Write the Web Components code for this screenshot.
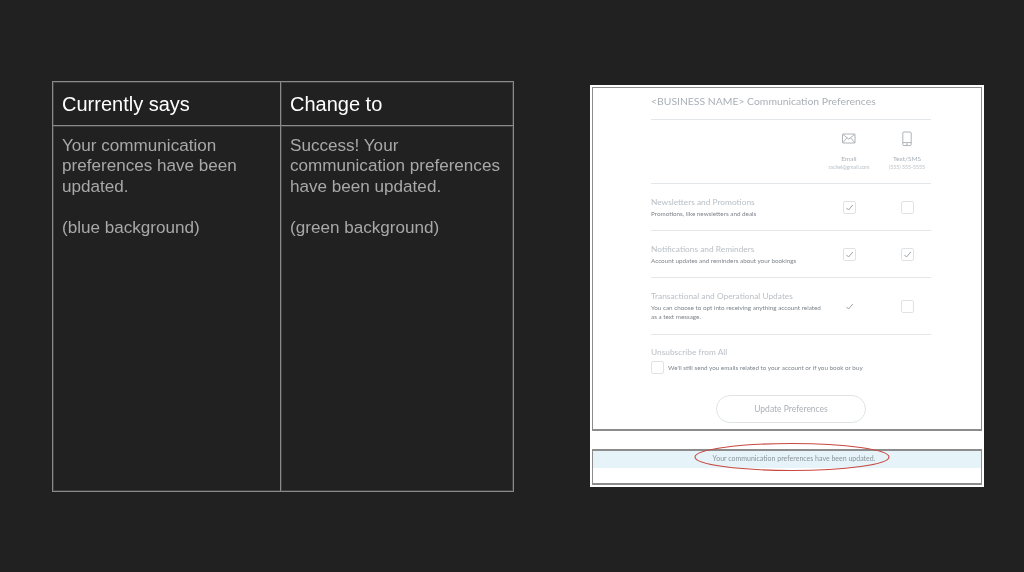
<!DOCTYPE html>
<html lang="en">
<head>
<meta charset="utf-8">
<title>Copy change</title>
<style>
  html, body { margin: 0; height: 100%; background: #212121; }
  body { overflow: hidden; font-family: "Liberation Sans", Arial, sans-serif; }
</style>
</head>
<body>
<copy-slide>
  <copy-table slot="table">
    <copy-column>
      <span slot="head">Currently says</span>
      Your communication preferences have been updated.<br><br>(blue background)
    </copy-column>
    <copy-column>
      <span slot="head">Change to</span>
      Success! Your communication preferences have been updated.<br><br>(green background)
    </copy-column>
  </copy-table>
  <prefs-shot slot="shot">
    <pref-row title="Newsletters and Promotions" email="on" sms="off">Promotions, like newsletters and deals</pref-row>
    <pref-row title="Notifications and Reminders" email="on" sms="on">Account updates and reminders about your bookings</pref-row>
    <pref-row title="Transactional and Operational Updates" email="bare" sms="off" tall>You can choose to opt into receiving anything account related<br>as a text message.</pref-row>
  </prefs-shot>
</copy-slide>

<script>
(function () {
  const CHECK = '<svg viewBox="0 0 13 13" width="13" height="13"><path d="M3.4 6.9 5.5 9 9.8 4" fill="none" stroke="#8f979d" stroke-width="0.9"/></svg>';

  class CopySlide extends HTMLElement {
    constructor() {
      super();
      this.attachShadow({ mode: 'open' });
      this.shadowRoot.innerHTML = `
        <style>
          :host { display: flex; align-items: flex-start; padding: 81px 0 0 52px; gap: 76px; }
          .shot { display: block; margin-top: 4px; }
        </style>
        <slot name="table"></slot>
        <div class="shot"><slot name="shot"></slot></div>
      `;
    }
  }

  class CopyTable extends HTMLElement {
    constructor() {
      super();
      this.attachShadow({ mode: 'open' });
      this.shadowRoot.innerHTML = `
        <style>
          :host {
            display: grid;
            grid-template-columns: 228px 1fr;
            box-sizing: border-box;
            width: 462px;
            height: 411px;
            border: 1px solid #8a8a8a;
            box-shadow: inset 0 0 0 1px #3e3e3e;
          }
        </style>
        <slot></slot>
      `;
    }
  }

  class CopyColumn extends HTMLElement {
    constructor() {
      super();
      this.attachShadow({ mode: 'open' });
      this.shadowRoot.innerHTML = `
        <style>
          :host { display: flex; flex-direction: column; min-width: 0; }
          :host(:first-child) { border-right: 1px solid #8a8a8a; box-shadow: 1px 0 0 #3e3e3e; }
          .head {
            box-sizing: border-box;
            height: 44px;
            padding: 11px 9px 0;
            border-bottom: 1px solid #8a8a8a;
            box-shadow: 0 1px 0 #3e3e3e;
            color: #fff;
            font-size: 20px;
            line-height: 23px;
          }
          .body {
            padding: 10px 9px 0;
            color: #a8a8a8;
            font-size: 17.1px;
            line-height: 20.4px;
          }
          .head span, .body span { display: block; filter: blur(0.3px); }
        </style>
        <div class="head"><span><slot name="head"></slot></span></div>
        <div class="body"><span><slot></slot></span></div>
      `;
    }
  }

  class PrefBox extends HTMLElement {
    static get observedAttributes() {
      return ['state'];
    }

    constructor() {
      super();
      this.attachShadow({ mode: 'open' });
    }

    connectedCallback() {
      this.render();
    }

    attributeChangedCallback() {
      if (this.isConnected) {
        this.render();
      }
    }

    render() {
      const state = this.getAttribute('state') || 'off';
      this.shadowRoot.innerHTML = `
        <style>
          :host { display: block; width: 13px; height: 13px; }
          .box {
            box-sizing: border-box;
            width: 13px;
            height: 13px;
            border: 1px solid ${state === 'bare' ? 'transparent' : '#dfe3e6'};
            border-radius: 2px;
            position: relative;
          }
          svg { position: absolute; left: -1px; top: -1px; display: block; }
        </style>
        <div class="box">${state === 'off' ? '' : CHECK}</div>
      `;
    }
  }

  class PrefRow extends HTMLElement {
    constructor() {
      super();
      this.attachShadow({ mode: 'open' });
    }

    connectedCallback() {
      const tall = this.hasAttribute('tall');
      this.shadowRoot.innerHTML = `
        <style>
          :host {
            display: grid;
            grid-template-columns: 164px 68px 48px;
            align-items: center;
            justify-items: center;
            height: ${tall ? 56 : 46}px;
            border-bottom: 1px solid #e4e7e9;
          }
          .text { justify-self: start; white-space: nowrap; }
          .title { color: #b9c0c6; font-size: 8.35px; line-height: 11px; }
          .desc { margin-top: 1px; color: #7d858c; font-size: 6.3px; line-height: ${tall ? 9.5 : 9}px; }
        </style>
        <div class="text">
          <div class="title">${this.getAttribute('title')}</div>
          <div class="desc"><slot></slot></div>
        </div>
        <pref-box state="${this.getAttribute('email')}"></pref-box>
        <pref-box state="${this.getAttribute('sms')}"></pref-box>
      `;
    }
  }

  class PrefsShot extends HTMLElement {
    constructor() {
      super();
      this.attachShadow({ mode: 'open' });
      this.shadowRoot.innerHTML = `
        <style>
          :host {
            display: block;
            box-sizing: border-box;
            width: 394px;
            height: 402px;
            padding: 2px;
            position: relative;
            background: #fff;
            font-family: Lato, "Open Sans", sans-serif;
          }
          .frame { box-sizing: border-box; border: 1px solid #8c8c8c; width: 390px; }
          .top { height: 344px; padding: 0 50px 0 58px; border-bottom-width: 2px; }
          .inner { filter: blur(0.5px); }
          .heading { height: 31px; border-bottom: 1px solid #e4e7e9; color: #a9b0b7; font-size: 10.4px; line-height: 27px; }
          .channels {
            display: grid;
            grid-template-columns: 164px 68px 48px;
            justify-items: center;
            height: 64px;
            border-bottom: 1px solid #e4e7e9;
            box-sizing: border-box;
            text-align: center;
          }
          .channel { display: flex; flex-direction: column; align-items: center; padding-top: 11px; white-space: nowrap; }
          .channel svg { display: block; height: 16px; }
          .channel b { margin-top: 7px; font-weight: 400; color: #aab1b7; font-size: 6.5px; line-height: 9px; }
          .channel small { color: #b9c0c6; font-size: 5.2px; line-height: 9px; }
          .unsub { padding-top: 12px; }
          .unsub h4 { margin: 0; font-weight: 400; color: #b9c0c6; font-size: 8.35px; line-height: 11px; }
          .opt { display: flex; align-items: center; gap: 4px; margin-top: 3px; color: #7d858c; font-size: 6.3px; }
          .cta { display: flex; justify-content: center; padding-top: 21px; }
          .cta span {
            box-sizing: border-box;
            width: 150px;
            height: 28px;
            border: 1px solid #dfe3e6;
            border-radius: 14px;
            color: #aab1b7;
            font-size: 8.5px;
            line-height: 26px;
            text-align: center;
          }
          .gap { height: 18px; }
          .banner { height: 36px; border-width: 2px 1px; }
          .banner div {
            box-sizing: border-box;
            height: 17px;
            padding-left: 14px;
            background: #e6f3f9;
            color: #8b949c;
            font-size: 7px;
            line-height: 15px;
            text-align: center;
          }
          .banner span { display: block; filter: blur(0.4px); }
          .ring { position: absolute; left: 103px; top: 357px; display: block; }
        </style>
        <div class="frame top">
          <div class="inner">
            <div class="heading">&lt;BUSINESS NAME&gt; Communication Preferences</div>
            <div class="channels">
              <span></span>
              <div class="channel">
                <svg viewBox="0 0 16 16" width="16" height="16" fill="none" stroke="#9aa1a7" stroke-width="0.8">
                  <rect x="1.5" y="3" width="12.5" height="9" rx="0.6"/>
                  <path d="M1.8 3.3 7.75 8.1 13.8 3.3M1.8 11.7 6 6.7M13.8 11.7 9.5 6.7"/>
                </svg>
                <b>Email</b><small>rachel@gmail.com</small>
              </div>
              <div class="channel">
                <svg viewBox="0 0 10 16" width="10" height="16" fill="none" stroke="#9aa1a7" stroke-width="0.8">
                  <rect x="0.8" y="1" width="8.4" height="13.6" rx="1"/>
                  <path d="M0.8 11.6H9.2M4 13.1H6"/>
                </svg>
                <b>Text/SMS</b><small>(555) 555-5555</small>
              </div>
            </div>
            <slot></slot>
            <div class="unsub">
              <h4>Unsubscribe from All</h4>
              <div class="opt"><pref-box state="off"></pref-box>We'll still send you emails related to your account or if you book or buy</div>
            </div>
            <div class="cta"><span>Update Preferences</span></div>
          </div>
        </div>
        <div class="gap"></div>
        <div class="frame banner"><div><span>Your communication preferences have been updated.</span></div></div>
        <svg class="ring" width="198" height="30" viewBox="0 0 198 30">
          <ellipse cx="99" cy="15" rx="97" ry="13.5" fill="none" stroke="#c8483f" stroke-width="1.1"/>
        </svg>
      `;
    }
  }

  customElements.define('copy-slide', CopySlide);
  customElements.define('copy-table', CopyTable);
  customElements.define('copy-column', CopyColumn);
  customElements.define('pref-box', PrefBox);
  customElements.define('pref-row', PrefRow);
  customElements.define('prefs-shot', PrefsShot);
})();
</script>
</body>
</html>
